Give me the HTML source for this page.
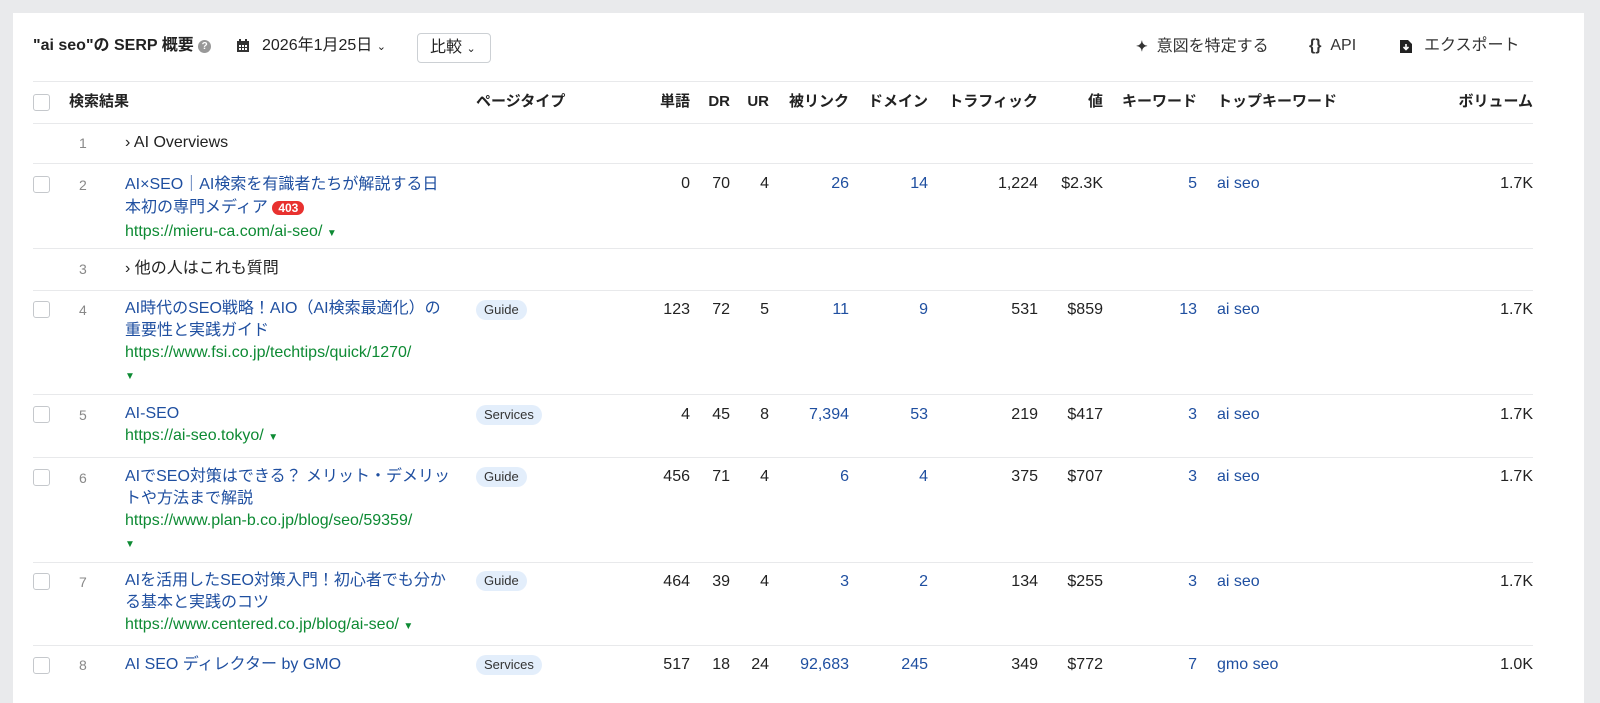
<!DOCTYPE html>
<html><head><meta charset="utf-8"><style>
*{margin:0;padding:0;box-sizing:border-box}
body{width:1600px;height:689px;background:#e9eaec;font-family:"Liberation Sans","Noto Sans CJK JP",sans-serif;font-size:16px;color:#222;overflow:hidden;position:relative}
.card{position:absolute;left:13px;top:13px;width:1571px;height:690px;background:#fff}
.a{position:absolute;white-space:nowrap;line-height:22px}
.r{text-align:right}
.hl{position:absolute;left:33px;width:1500px;height:1px;background:#e8e9eb}
.cb{position:absolute;left:33px;width:17px;height:17px;border:1px solid #c5c8cc;border-radius:3px;background:#fff}
.num{color:#888;font-size:14px}
.lk{color:#1f4fa0}
.gr{color:#0d8a33}
.th{font-weight:bold;font-size:15px;color:#222}
.tag{position:absolute;background:#e3eefb;border-radius:10px;font-size:13px;line-height:20px;padding:0 8px;color:#333}
.tri{font-size:10px;color:#0d8a33}
</style></head><body>
<div class="card"></div>
<div class="a" style="left:33px;top:35px;font-weight:bold;font-size:16px">"ai seo"の SERP 概要 <span style="display:inline-block;width:13px;height:13px;border-radius:50%;background:#999;color:#fff;font-size:10px;text-align:center;line-height:13px;vertical-align:1px">?</span></div>
<svg style="position:absolute;left:236px;top:39px" width="14" height="14" viewBox="0 0 14 14"><rect x="1" y="2" width="12" height="11" fill="#333"/><rect x="3" y="0" width="2" height="3" fill="#333"/><rect x="9" y="0" width="2" height="3" fill="#333"/><g fill="#fff"><rect x="3" y="6" width="2" height="2"/><rect x="6" y="6" width="2" height="2"/><rect x="9" y="6" width="2" height="2"/><rect x="3" y="9" width="2" height="2"/><rect x="6" y="9" width="2" height="2"/><rect x="9" y="9" width="2" height="2"/></g></svg>
<div class="a" style="left:262px;top:35px;font-size:16px">2026年1月25日 <span style="font-size:11px">⌄</span></div>
<div style="position:absolute;left:417px;top:33px;width:74px;height:30px;border:1px solid #ccd0d4;border-radius:4px;font-size:16px;line-height:28px;padding-left:12px">比較 <span style="font-size:11px">⌄</span></div>
<div class="a" style="left:1136px;top:35px;font-size:16px;color:#333"><b style="font-size:14px">✦</b> &nbsp;意図を特定する</div>
<div class="a" style="left:1309px;top:35px;font-size:16px;color:#333"><b>{}</b> &nbsp;API</div>
<svg style="position:absolute;left:1399px;top:39px" width="14" height="15" viewBox="0 0 14 15"><path d="M1 1h8l4 4v9H1z" fill="#222"/><path d="M7 5v5M4.5 8l2.5 2.5L9.5 8" stroke="#fff" stroke-width="1.6" fill="none"/></svg>
<div class="a" style="left:1424px;top:35px;font-size:16px;color:#333">エクスポート</div>

<div class="hl" style="top:81px"></div>
<div class="cb" style="top:94px"></div>
<div class="a th" style="left:69px;top:91px">検索結果</div>
<div class="a th" style="left:476px;top:91px">ページタイプ</div>
<div class="a th r" style="right:910px;top:91px">単語</div>
<div class="a th r" style="right:870px;top:91px">DR</div>
<div class="a th r" style="right:831px;top:91px">UR</div>
<div class="a th r" style="right:751px;top:91px">被リンク</div>
<div class="a th r" style="right:672px;top:91px">ドメイン</div>
<div class="a th r" style="right:562px;top:91px">トラフィック</div>
<div class="a th r" style="right:497px;top:91px">値</div>
<div class="a th r" style="right:403px;top:91px">キーワード</div>
<div class="a th" style="left:1217px;top:91px">トップキーワード</div>
<div class="a th r" style="right:67px;top:91px">ボリューム</div>
<div class="hl" style="top:123px"></div>

<div class="a num" style="left:79px;top:132px">1</div>
<div class="a" style="left:125px;top:132px">› AI Overviews</div>
<div class="hl" style="top:163px"></div>

<div class="cb" style="top:176px"></div>
<div class="a num" style="left:79px;top:174px">2</div>
<div class="a lk" style="left:125px;top:173px;line-height:23px">AI×SEO｜AI検索を有識者たちが解説する日<br>本初の専門メディア <span style="background:#e8312f;color:#fff;border-radius:9px;font-size:12px;padding:0 6px;font-weight:bold">403</span><br><span class="gr">https://mieru-ca.com/ai-seo/ <span class="tri">▼</span></span></div>
<div class="hl" style="top:248px"></div>

<div class="a num" style="left:79px;top:258px">3</div>
<div class="a" style="left:125px;top:258px">› 他の人はこれも質問</div>
<div class="hl" style="top:290px"></div>

<div class="hl" style="top:394px"></div>
<div class="hl" style="top:457px"></div>
<div class="hl" style="top:562px"></div>
<div class="hl" style="top:645px"></div>

<div class="cb" style="top:301px"></div><div class="a num" style="left:79px;top:299px">4</div>
<div class="a lk" style="left:125px;top:298px;line-height:22px">AI時代のSEO戦略！AIO（AI検索最適化）の<br>重要性と実践ガイド<br><span class="gr">https://www.fsi.co.jp/techtips/quick/1270/<br><span class="tri">▼</span></span></div>
<div class="tag" style="left:476px;top:300px">Guide</div>

<div class="cb" style="top:406px"></div><div class="a num" style="left:79px;top:404px">5</div>
<div class="a lk" style="left:125px;top:403px;line-height:22px">AI-SEO<br><span class="gr">https://ai-seo.tokyo/ <span class="tri">▼</span></span></div>
<div class="tag" style="left:476px;top:405px">Services</div>

<div class="cb" style="top:469px"></div><div class="a num" style="left:79px;top:467px">6</div>
<div class="a lk" style="left:125px;top:466px;line-height:22px">AIでSEO対策はできる？ メリット・デメリッ<br>トや方法まで解説<br><span class="gr">https://www.plan-b.co.jp/blog/seo/59359/<br><span class="tri">▼</span></span></div>
<div class="tag" style="left:476px;top:467px">Guide</div>

<div class="cb" style="top:573px"></div><div class="a num" style="left:79px;top:571px">7</div>
<div class="a lk" style="left:125px;top:570px;line-height:22px">AIを活用したSEO対策入門！初心者でも分か<br>る基本と実践のコツ<br><span class="gr">https://www.centered.co.jp/blog/ai-seo/ <span class="tri">▼</span></span></div>
<div class="tag" style="left:476px;top:571px">Guide</div>

<div class="cb" style="top:657px"></div><div class="a num" style="left:79px;top:654px">8</div>
<div class="a lk" style="left:125px;top:654px">AI SEO ディレクター by GMO</div>
<div class="tag" style="left:476px;top:655px">Services</div>

<div class="a r" style="right:910px;top:173px">0</div>
<div class="a r" style="right:870px;top:173px">70</div><div class="a r" style="right:831px;top:173px">4</div>
<div class="a r lk" style="right:751px;top:173px">26</div><div class="a r lk" style="right:672px;top:173px">14</div>
<div class="a r" style="right:562px;top:173px">1,224</div><div class="a r" style="right:497px;top:173px">$2.3K</div>
<div class="a r lk" style="right:403px;top:173px">5</div><div class="a lk" style="left:1217px;top:173px">ai seo</div><div class="a r" style="right:67px;top:173px">1.7K</div>

<div class="a r" style="right:910px;top:299px">123</div><div class="a r" style="right:870px;top:299px">72</div><div class="a r" style="right:831px;top:299px">5</div>
<div class="a r lk" style="right:751px;top:299px">11</div><div class="a r lk" style="right:672px;top:299px">9</div>
<div class="a r" style="right:562px;top:299px">531</div><div class="a r" style="right:497px;top:299px">$859</div>
<div class="a r lk" style="right:403px;top:299px">13</div><div class="a lk" style="left:1217px;top:299px">ai seo</div><div class="a r" style="right:67px;top:299px">1.7K</div>

<div class="a r" style="right:910px;top:404px">4</div><div class="a r" style="right:870px;top:404px">45</div><div class="a r" style="right:831px;top:404px">8</div>
<div class="a r lk" style="right:751px;top:404px">7,394</div><div class="a r lk" style="right:672px;top:404px">53</div>
<div class="a r" style="right:562px;top:404px">219</div><div class="a r" style="right:497px;top:404px">$417</div>
<div class="a r lk" style="right:403px;top:404px">3</div><div class="a lk" style="left:1217px;top:404px">ai seo</div><div class="a r" style="right:67px;top:404px">1.7K</div>

<div class="a r" style="right:910px;top:466px">456</div><div class="a r" style="right:870px;top:466px">71</div><div class="a r" style="right:831px;top:466px">4</div>
<div class="a r lk" style="right:751px;top:466px">6</div><div class="a r lk" style="right:672px;top:466px">4</div>
<div class="a r" style="right:562px;top:466px">375</div><div class="a r" style="right:497px;top:466px">$707</div>
<div class="a r lk" style="right:403px;top:466px">3</div><div class="a lk" style="left:1217px;top:466px">ai seo</div><div class="a r" style="right:67px;top:466px">1.7K</div>

<div class="a r" style="right:910px;top:571px">464</div><div class="a r" style="right:870px;top:571px">39</div><div class="a r" style="right:831px;top:571px">4</div>
<div class="a r lk" style="right:751px;top:571px">3</div><div class="a r lk" style="right:672px;top:571px">2</div>
<div class="a r" style="right:562px;top:571px">134</div><div class="a r" style="right:497px;top:571px">$255</div>
<div class="a r lk" style="right:403px;top:571px">3</div><div class="a lk" style="left:1217px;top:571px">ai seo</div><div class="a r" style="right:67px;top:571px">1.7K</div>

<div class="a r" style="right:910px;top:654px">517</div><div class="a r" style="right:870px;top:654px">18</div><div class="a r" style="right:831px;top:654px">24</div>
<div class="a r lk" style="right:751px;top:654px">92,683</div><div class="a r lk" style="right:672px;top:654px">245</div>
<div class="a r" style="right:562px;top:654px">349</div><div class="a r" style="right:497px;top:654px">$772</div>
<div class="a r lk" style="right:403px;top:654px">7</div><div class="a lk" style="left:1217px;top:654px">gmo seo</div><div class="a r" style="right:67px;top:654px">1.0K</div>
</body></html>
